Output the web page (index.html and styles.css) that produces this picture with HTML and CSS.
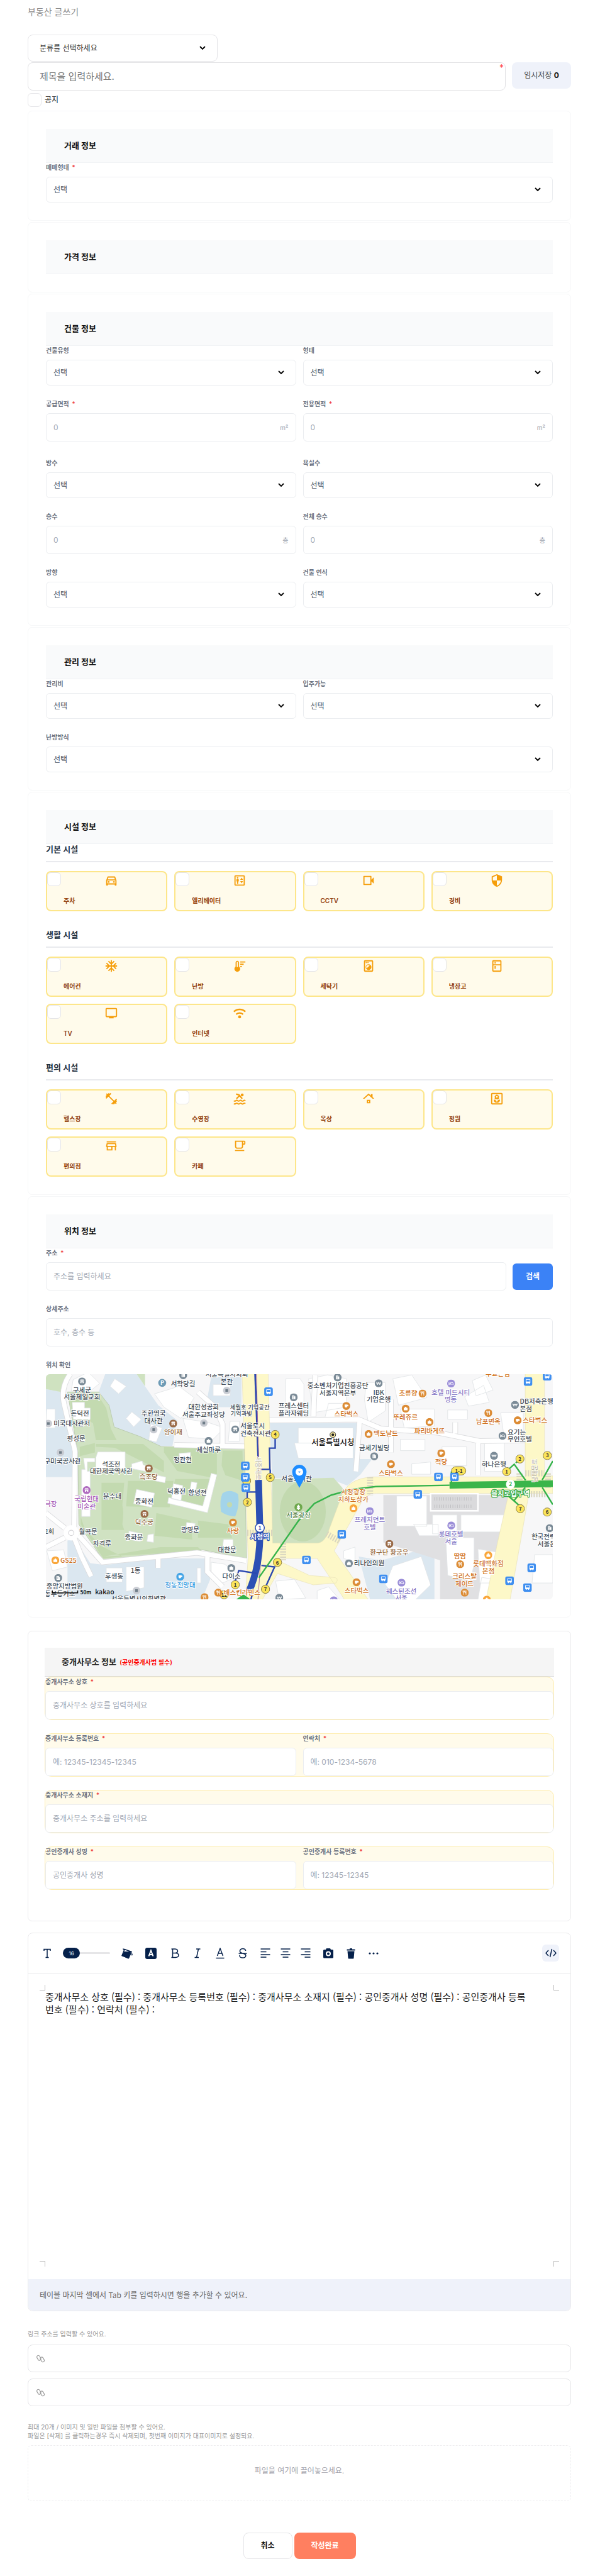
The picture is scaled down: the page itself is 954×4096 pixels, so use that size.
FILE: index.html
```html
<!DOCTYPE html>
<html lang="ko">
<head>
<meta charset="utf-8">
<meta name="viewport" content="width=device-width, initial-scale=1">
<title>부동산 글쓰기</title>
<link rel="stylesheet" href="styles.css">
</head>
<body>
<svg class="defs" width="0" height="0" aria-hidden="true">
  <symbol id="chain" viewBox="0 0 24 24"><g fill="none" stroke="currentColor" stroke-width="1.800" transform="rotate(-30 12 12)"><rect x="5.500" y="1.500" width="7.500" height="13" rx="3.750"/><rect x="11" y="9.500" width="7.500" height="13" rx="3.750"/></g></symbol>
  <symbol id="poi-cup" viewBox="-21 -21 42 42"><circle r="21"/><path d="M-9-8H6v2h5v8H5c-1 4-3 6-7 6s-7-3-7-8z" fill="#fff"/></symbol>
  <symbol id="poi-fork" viewBox="-21 -21 42 42"><circle r="21"/><path d="M-9-11v7q0 3 4 3v12M-5-11v8M-1-11v7q0 3-4 3M7 11V-11q-5 3-5 12h5" fill="none" stroke="#fff" stroke-width="3"/></symbol>
  <symbol id="poi-bed" viewBox="-21 -21 42 42"><circle r="21"/><path d="M-11-8v16M-11 4h22v4M11 4V-1q0-4-5-4H-3v8" fill="none" stroke="#fff" stroke-width="3"/><circle cx="-6" cy="-1" r="2.500" fill="#fff"/></symbol>
  <symbol id="poi-won" viewBox="-21 -21 42 42"><circle r="21"/><path d="M-11-7l5 15L0-6l6 14 5-15M-13-1h26" fill="none" stroke="#fff" stroke-width="3"/></symbol>
  <symbol id="poi-bld" viewBox="-21 -21 42 42"><circle r="21"/><path d="M-9-10H4v5h5V10H-9z" fill="#fff"/><path d="M-5-5h5M-5 0h5M-5 5h5" stroke="#7b8b97" stroke-width="2"/></symbol>
  <symbol id="poi-gate" viewBox="-21 -21 42 42"><circle r="21"/><path d="M-8-10H8l3 7H-11zM-9-1H9V9H3V3H-3V9H-9z" fill="#fff"/></symbol>
  <symbol id="poi-bag" viewBox="-21 -21 42 42"><circle r="21"/><path d="M-10-4h20V9h-20zM-5-4q0-6 5-6t5 6" fill="#fff"/></symbol>
  <symbol id="poi-bus" viewBox="-22 -22 44 44"><rect x="-22" y="-22" width="44" height="44" rx="11"/><path d="M-10-11h20V7H-10z" fill="none" stroke="#fff" stroke-width="3"/><path d="M-10 0h20v7h-20zM-8 7h4v5h-4zM4 7h4v5H4z" fill="#fff"/></symbol>
  <symbol id="poi-dot" viewBox="-21 -21 42 42"><circle r="20" fill="#c9ccd3"/><rect x="-7" y="-7" width="14" height="14" fill="#6f7d88"/></symbol>
  <symbol id="exit" viewBox="-24 -24 48 48"><circle r="22" fill="#fbe45a" stroke="#7c7040" stroke-width="3"/></symbol>
</svg>

<main class="page">
  <h1 class="page-title">부동산 글쓰기</h1>

  <form class="write">
    <select class="select category" aria-label="분류"><option>분류를 선택하세요</option></select>
    <div class="title-row">
      <div class="title-box">
        <input class="title-input" type="text" placeholder="제목을 입력하세요." aria-label="제목">
        <span class="title-mark">*</span>
      </div>
      <button class="temp-btn" type="button">임시저장 <b>0</b></button>
    </div>
    <label class="notice"><input class="check" type="checkbox"> 공지</label>

    <div class="cards">
      <section class="card">
        <h2 class="card-head">거래 정보</h2>
        <div class="field"><label for="deal">매매형태 <i>*</i></label><select class="select" id="deal"><option>선택</option></select></div>
      </section>

      <section class="card">
        <h2 class="card-head">가격 정보</h2>
      </section>

      <section class="card">
        <h2 class="card-head">건물 정보</h2>
        <div class="row">
          <div class="field"><label for="btype">건물유형</label><select class="select" id="btype"><option>선택</option></select></div>
          <div class="field"><label for="shape">형태</label><select class="select" id="shape"><option>선택</option></select></div>
        </div>
        <div class="row row-area">
          <div class="field"><label for="a1">공급면적 <i>*</i></label><div class="input unit"><input id="a1" type="text" placeholder="0"><span>m²</span></div></div>
          <div class="field"><label for="a2">전용면적 <i>*</i></label><div class="input unit"><input id="a2" type="text" placeholder="0"><span>m²</span></div></div>
        </div>
        <div class="row">
          <div class="field"><label for="rooms">방수</label><select class="select" id="rooms"><option>선택</option></select></div>
          <div class="field"><label for="baths">욕실수</label><select class="select" id="baths"><option>선택</option></select></div>
        </div>
        <div class="row">
          <div class="field"><label for="fl">층수</label><div class="input unit"><input id="fl" type="text" placeholder="0"><span>층</span></div></div>
          <div class="field"><label for="tfl">전체 층수</label><div class="input unit"><input id="tfl" type="text" placeholder="0"><span>층</span></div></div>
        </div>
        <div class="row">
          <div class="field"><label for="dir">방향</label><select class="select" id="dir"><option>선택</option></select></div>
          <div class="field"><label for="year">건물 연식</label><select class="select" id="year"><option>선택</option></select></div>
        </div>
      </section>

      <section class="card">
        <h2 class="card-head">관리 정보</h2>
        <div class="row">
          <div class="field"><label for="fee">관리비</label><select class="select" id="fee"><option>선택</option></select></div>
          <div class="field"><label for="move">입주가능</label><select class="select" id="move"><option>선택</option></select></div>
        </div>
        <div class="row">
          <div class="field"><label for="heat">난방방식</label><select class="select" id="heat"><option>선택</option></select></div>
        </div>
      </section>

      <section class="card">
        <h2 class="card-head">시설 정보</h2>
        <h3 class="group-title">기본 시설</h3>
        <div class="tiles">
          <label class="tile"><input class="check" type="checkbox"><svg viewBox="0 0 24 24"><path d="M18.920 6.010C18.720 5.420 18.160 5 17.500 5h-11c-.66 0-1.210.42-1.420 1.010L3 12v8c0 .55.45 1 1 1h1c.55 0 1-.45 1-1v-1h12v1c0 .55.45 1 1 1h1c.55 0 1-.45 1-1v-8l-2.080-5.990zM6.850 7h10.290l1.080 3.110H5.770L6.850 7zM19 17H5v-5h14v5z"/><circle cx="7.500" cy="14.500" r="1.500"/><circle cx="16.500" cy="14.500" r="1.500"/></svg><span>주차</span></label>
          <label class="tile"><input class="check" type="checkbox"><svg viewBox="0 0 24 24"><path d="M19 3H5c-1.100 0-2 .9-2 2v14c0 1.100.9 2 2 2h14c1.100 0 2-.9 2-2V5c0-1.100-.9-2-2-2zm0 16H5V5h14v14z"/><circle cx="8.500" cy="7.200" r="1.300"/><path d="M7.500 18h2v-4.500h1V11c0-1.100-.6-2-2-2s-2 .9-2 2v2.500h1zM15.500 7 13 11h5zM15.500 17l2.500-4h-5z"/></svg><span>엘리베이터</span></label>
          <label class="tile"><input class="check" type="checkbox"><svg viewBox="0 0 24 24"><path d="M15 6v12H5V6h10m1-2H4c-.55 0-1 .45-1 1v14c0 .55.45 1 1 1h12c.55 0 1-.45 1-1v-5.500l4 4v-11l-4 4V5c0-.55-.45-1-1-1z"/></svg><span>CCTV</span></label>
          <label class="tile"><input class="check" type="checkbox"><svg viewBox="0 0 24 24"><path d="M12 1L3 5v6c0 5.550 3.840 10.740 9 12 5.160-1.260 9-6.450 9-12V5l-9-4zm0 10.990h7c-.53 4.120-3.280 7.790-7 8.940V12H5V6.300l7-3.110v8.800z"/></svg><span>경비</span></label>
        </div>
        <h3 class="group-title">생활 시설</h3>
        <div class="tiles">
          <label class="tile"><input class="check" type="checkbox"><svg viewBox="0 0 24 24"><path d="M22 11h-4.170l3.240-3.240-1.410-1.420L15 11h-2V9l4.660-4.660-1.420-1.410L13 6.170V2h-2v4.170L7.760 2.930 6.340 4.340 11 9v2H9L4.340 6.340 2.930 7.760 6.170 11H2v2h4.170l-3.240 3.240 1.410 1.420L9 13h2v2l-4.660 4.660 1.420 1.410L11 17.830V22h2v-4.170l3.240 3.240 1.420-1.410L13 15v-2h2l4.660 4.660 1.410-1.420L17.830 13H22z"/></svg><span>에어컨</span></label>
          <label class="tile"><input class="check" type="checkbox"><svg viewBox="0 0 24 24"><path d="M11 13V6c0-1.660-1.340-3-3-3S5 4.340 5 6v7c-1.210.91-2 2.370-2 4 0 2.760 2.240 5 5 5s5-2.240 5-5c0-1.630-.79-3.090-2-4zM7 6c0-.55.45-1 1-1s1 .45 1 1v8H7z"/><path d="M13 4h9v2h-9zM13 8h6v2h-6zM13 12h3v1.500h-3z"/></svg><span>난방</span></label>
          <label class="tile"><input class="check" type="checkbox"><svg viewBox="0 0 24 24"><path d="M18 2.010L6 2c-1.110 0-2 .89-2 2v16c0 1.110.89 2 2 2h12c1.110 0 2-.89 2-2V4c0-1.110-.89-1.990-2-1.990zM18 20H6V4h12v16z"/><circle cx="8" cy="6" r="1"/><circle cx="11" cy="6" r="1"/><path d="M12 9a5 5 0 1 0 0 10 5 5 0 0 0 0-10zm0 1.500q1 0 2 .6l-5.400 5a3.500 3.500 0 0 1 3.400-5.600z"/></svg><span>세탁기</span></label>
          <label class="tile"><input class="check" type="checkbox"><svg viewBox="0 0 24 24"><path d="M18 2.010L6 2c-1.100 0-2 .89-2 2v16c0 1.100.9 2 2 2h12c1.100 0 2-.9 2-2V4c0-1.110-.9-1.990-2-1.990zM18 20H6v-9.020h12V20zm0-11H6V4h12v5zM8 5h2v3H8zm0 7h2v5H8z"/></svg><span>냉장고</span></label>
          <label class="tile"><input class="check" type="checkbox"><svg viewBox="0 0 24 24"><path d="M20 3H4c-1.100 0-2 .9-2 2v12c0 1.100.9 2 2 2h4v2h8v-2h4c1.100 0 2-.9 2-2V5c0-1.100-.9-2-2-2zm0 14H4V5h16v12z"/></svg><span>TV</span></label>
          <label class="tile"><input class="check" type="checkbox"><svg viewBox="0 0 24 24"><g fill="none" stroke="#f59e0b" stroke-width="2.600"><path d="M2 9.500a14.500 14.500 0 0 1 20 0M6 14a8.700 8.700 0 0 1 12 0"/></g><circle cx="12" cy="18.500" r="2.600"/></svg><span>인터넷</span></label>
        </div>
        <h3 class="group-title">편의 시설</h3>
        <div class="tiles">
          <label class="tile"><input class="check" type="checkbox"><svg viewBox="0 0 24 24"><path d="M20.570 14.860L22 13.430 20.570 12 17 15.570 8.430 7 12 3.430 10.570 2 9.140 3.430 7.710 2 5.570 4.140 4.140 2.710 2.710 4.140l1.430 1.430L2 7.710l1.430 1.430L2 10.570 3.430 12 7 8.430 15.570 17 12 20.570 13.430 22l1.430-1.430L16.290 22l2.140-2.140 1.430 1.430 1.430-1.430-1.430-1.430L22 16.290l-1.430-1.430z"/></svg><span>헬스장</span></label>
          <label class="tile"><input class="check" type="checkbox"><svg viewBox="0 0 24 24"><g fill="none" stroke="#f59e0b" stroke-width="2"><path d="M2 15.500q1.700 1.500 3.300 0t3.400 0 3.300 0 3.300 0 3.400 0 3.300 0M2 20.500q1.700 1.500 3.300 0t3.400 0 3.300 0 3.300 0 3.400 0 3.300 0"/><path d="M6 4l5 1.500 5.500 6.500M12 6.500 6.500 12" stroke-width="2.400"/></g><circle cx="16.500" cy="5.500" r="2.500"/></svg><span>수영장</span></label>
          <label class="tile"><input class="check" type="checkbox"><svg viewBox="0 0 24 24"><path d="M13 18h-2v-2h2v2zm2-4H9v6h6v-6zm4-4.700V4h-3v2.600L12 3 2 12h3l7-6.310L19 12h3l-3-2.700z"/></svg><span>옥상</span></label>
          <label class="tile"><input class="check" type="checkbox"><svg viewBox="0 0 24 24"><path d="M20 2H4c-1.100 0-2 .9-2 2v16c0 1.100.9 2 2 2h16c1.100 0 2-.9 2-2V4c0-1.100-.9-2-2-2zm0 18H4V4h16v16z"/><path d="M12 19c3.300 0 5.500-2.200 5.500-5.500-3.300 0-5.500 2.200-5.500 5.500 0-3.300-2.200-5.500-5.500-5.500 0 3.300 2.200 5.500 5.500 5.500z"/><path fill-rule="evenodd" d="M12 5a2 2 0 0 1 2 1.200 2 2 0 0 1 1.300 3.300A2 2 0 0 1 12 12.500a2 2 0 0 1-3.300-3A2 2 0 0 1 10 6.200 2 2 0 0 1 12 5zm0 2.300a1.500 1.500 0 1 0 0 3 1.500 1.500 0 0 0 0-3z"/></svg><span>정원</span></label>
          <label class="tile"><input class="check" type="checkbox"><svg viewBox="0 0 24 24"><path d="M18.360 9l.6 3H5.040l.6-3h12.720M20 4H4v2h16V4zm0 3H4l-1 5v2h1v6h10v-6h4v6h2v-6h1v-2l-1-5zM6 18v-4h6v4H6z"/></svg><span>편의점</span></label>
          <label class="tile"><input class="check" type="checkbox"><svg viewBox="0 0 24 24"><path d="M16 5v8c0 1.100-.9 2-2 2H8c-1.100 0-2-.9-2-2V5h10m4-2H4v10c0 2.210 1.790 4 4 4h6c2.210 0 4-1.790 4-4v-3h2c1.110 0 2-.89 2-2V5c0-1.110-.89-2-2-2zm-2 5V5h2v3h-2zm2 11H4v2h16v-2z"/></svg><span>카페</span></label>
        </div>
      </section>

      <section class="card">
        <h2 class="card-head">위치 정보</h2>
        <div class="field">
          <label for="addr">주소 <i>*</i></label>
          <div class="search"><input class="input" id="addr" type="text" placeholder="주소를 입력하세요"><button class="search-btn" type="button">검색</button></div>
        </div>
        <div class="row"><div class="field"><label for="addr2">상세주소</label><input class="input" id="addr2" type="text" placeholder="호수, 층수 등"></div></div>
        <div class="row"><div class="field">
          <label>위치 확인</label>
          <svg class="map" viewBox="66 84 2680 1194" preserveAspectRatio="xMidYMid slice" role="img" aria-label="지도">
            <rect x="66" y="84" width="2680" height="1194" fill="#f7f7f8"/>
            <!-- embassy and office grounds -->
            <g fill="#dbe7f0">
              <path d="M66 165l85 15 70 260 14 60-25 130H66zM380 84h165l45 66 70 100 100 80-25 135h-65L560 420l-130-50-30-100-55-90zM940 100h160v160H950l-30-50z"/>
              <path d="M180 965l40-5 80 125 80 10 280-35h255l20 110-45 108H180zM1250 345h460v290H1262zM1700 635l0-100 90 0-60 80-70 60-100-40zM1720 1050l120 20 280-75v283h-340z"/>
            </g>
            <path d="M1850 725h740l-40 220-70 90-60 243h-270V1070l-300-95z" fill="#e0e0e2"/>
            <!-- parks -->
            <path d="M66 84h124l-45 96-79-15zM545 84h45v66z" fill="#cfe2c0"/>
            <path d="M180 180h165l55 70 27 115 135 50 113 53 440 12 12 580-257-50-500 60-130-190-5-380z" fill="#d0e2c2" stroke="#b9c9ae" stroke-width="3"/>
            <g fill="#c3dab0">
              <path d="M190 195h150l45 70 25 110 30 60-110 0-15-90-50-30-50 60zM330 455l250 0 110 90 0 60-260-130-100-5zM690 500l0-30 200 8 80 10 0 150-210-40zM1000 490h105l5 160-95-30-20-50zM250 840l0 40 120 180 100-10-120-60-80-90zM650 820l180 40 10 100-200-20zM870 860l160 20 20 70-180 0zM370 1050l300-50 200 0 20 20zM245 470l80-20 0 50-80 20zM500 650l240 0-20 140-230-5zM750 640l200 0-30 160-200-40z"/>
              <path d="M360 660h120l-10 120q10 30 0 100l10 30-60 0-60 0V780z"/>
            </g>
            <path d="M1262 640l325-6 53 60-80 250q-20 36-60 36H1262z" fill="#cfe1c0"/>
            <ellipse cx="1424" cy="812" rx="122" ry="158" fill="#c2d9af"/>
            <path d="M1000 715q40-25 82 5 10 60-15 118-40 0-75-25-10-60 8-98z" fill="#a3d4ea"/>
            <circle cx="1037" cy="776" r="14" fill="#c3dab0"/>
            <!-- buildings -->
            <g fill="#fff" stroke="#e1e4e6" stroke-width="3">
              <path d="M205 235l65 0 0 30 30 0 0 60-90 0zM340 497l145 0 0 90-155 0 0-60zM265 530h60v20h-40v50h15v238h-45V590h18zM520 560l55-15 5 20 30 10-15 25-75-15zM545 695l95 20-15 75-95-20zM940 610l30 8-50 200-210-50 5-30 180 45zM740 665l50 10-10 80-50-10zM835 655l30 5-10 60-30-5zM770 505l60-5 0 45-55 5zM505 915l70 15-10 40-60-10zM605 935l30-5 0 45-35-5zM1005 960h50l0 50-55-5zM810 870l45 5-5 40-45-5zM650 620l50 10-5 30-50-10z"/>
              <path d="M210 115l80-40 60 60-50 40-100 0zM430 110l60 40-40 40-45-40zM520 285l50 40-40 40-40-45zM620 350l60 20-30 75-40-10zM640 190l130-40 80 60-70 110-90-60zM790 320l130 20 90 30-60 60-130-10zM950 140h90v60h-90zM1040 335h50v105h-60zM1335 110l75 0 20 30 0 130-100 0zM385 1110l85 0 0 75-85 0zM490 1105l95 0 0 110-95 20zM865 1110h20v80h-20zM70 1020l90-5 20 90-80 20zM940 1080l70 10 80 60-90 40-60-50zM1280 1180l100-10 60 100-140 8zM70 270l45 0 0 100-50 0z"/>
              <path d="M1455 110l100-20 100 20 0 150-180 30zM1760 130l100 0 0 150-90 60-20-120zM1900 110l100-20 80 120-150 40zM2320 120l70-30 40 80-90 30zM1940 270l180 0 0 90-160 10zM2190 275h105v50h-105zM1560 240h90v80h-110zM1400 370h290v80h-290zM1380 450h310v80h-290zM1940 430h130v60h-130zM2160 470h130v100h-130zM2000 560l100-10 0 65-100 0zM2385 450h105v150h-105zM2470 290l120 0 0 120-100 20zM1920 730h160v160h-160zM2110 830h130v100h-130zM2260 830l280 0 0 90-280 0zM2010 880l130 0 0 60-100 0zM2180 950l150 0 0 140-20 90-120-30zM2350 1010l180 30-40 150-130 0zM2370 1160l120 20-20 98-120 0zM2650 1040h96v150h-110zM1900 1100l150-50 50 150-80 78-100 0-60-80zM1640 1020l60-20 0 80-60-20zM1500 1230l60-20 60 68h-120zM2280 205l100-60 30 90-110 20z"/>
            </g>
            <!-- minor roads: casing, then surface -->
            <g fill="none" stroke-width="30" stroke="#dcdddf"><path d="M195 84q-50 70-35 150l60 260-5 400M240 940l125 140 500-50 260 42M215 950l40 100 50 105M66 820l100 80M66 1000l100-50M745 460l370 8M870 180l90 80 40 90v110M660 1060v50M920 1040v90l80 80M1240 330l480-5 120 50 300 20 220 45 240-5M1725 330l-20 270M1890 220v280M1490 90l-10 220M2350 450v170M2230 340v60"/></g>
            <g fill="none" stroke-width="24" stroke="#fff"><path d="M195 84q-50 70-35 150l60 260-5 400M240 940l125 140 500-50 260 42M215 950l40 100 50 105M66 820l100 80M66 1000l100-50M745 460l370 8M870 180l90 80 40 90v110M660 1060v50M920 1040v90l80 80M1240 330l480-5 120 50 300 20 220 45 240-5M1725 330l-20 270M1890 220v280M1490 90l-10 220M2350 450v170M2230 340v60"/></g>
            <circle cx="200" cy="925" r="40" fill="#fff"/><circle cx="200" cy="925" r="14" fill="none" stroke="#d5d5d8" stroke-width="4"/>
            <!-- main roads -->
            <path d="M1103 84h138l24 895h235q35 0 55-50l75-200q30-90 160-100h810V84h102v540h44v92h-126l-60 340-40 222h-127l60-300 60-262h-700q-60 0-80 50L1590 1020l180 258h-125L1500 1060h-230l190 90 120 10q40 0 20 30l-120 10-190-60-80 138h-90l15-220z" fill="#fdf8c8" stroke="#e6dfb6" stroke-width="2"/>
            <path d="M2100 718h250v90h-250z" fill="#dadadc" stroke="#fff" stroke-width="8"/>
            <path d="M2120 745h200M2120 785h200" stroke="#bdbdc0" stroke-width="18" stroke-dasharray="3 9"/>
            <g stroke="#d9d6c0" stroke-width="32" stroke-dasharray="7 7" fill="none"><path d="M1130 925h135M1320 980v90M1780 630v100M2570 610v80M2720 610v80M1550 930l70 40M2600 610h100M2630 720h80"/></g>
            <!-- subway lines -->
            <g fill="none">
              <path d="M1172 84l16 440" stroke="#2b48b0" stroke-width="9"/><path d="M1179 84l14 560 20 260-26 374" stroke="#a0609d" stroke-width="3"/>
              <path d="M1190 645l7 255q5 200-60 340" stroke="#2c50b4" stroke-width="36"/>
              <path d="M1278 425v52h-30l2 112h-50M1252 590v20M1130 745v-36h50M1066 1180l20-56 100 16M1205 1097l70 8-45 100M1150 1278l10-40" stroke="#2b48b0" stroke-width="8"/>
              <path d="M1192 1162l210-302 83-90 90-45 110-30 125-15 390-7" stroke="#35b34a" stroke-width="8"/>
              <path d="M2200 673l546-8" stroke="#3ab54a" stroke-width="36"/>
              <path d="M2210 660v-60M2500 600l42-38 60 85M2550 555l30-25M2690 645l56-100M2690 685l56 90M2600 685l-60 70 40 35M2500 720l40 35" stroke="#35b34a" stroke-width="8"/>
              <path d="M1070 1278l40-28 40 28z" fill="#35b34a"/>
            </g>
            <!-- exits -->
            <use href="#exit" x="1254" y="381" width="48" height="48"/><use href="#exit" x="1228" y="608" width="48" height="48"/><use href="#exit" x="1103" y="625" width="48" height="48"/><use href="#exit" x="1107" y="739" width="48" height="48"/><use href="#exit" x="1266" y="1057" width="48" height="48"/><use href="#exit" x="1203" y="1199" width="48" height="48"/><use href="#exit" x="1043" y="1175" width="48" height="48"/><use href="#exit" x="984" y="1228" width="48" height="48"/>
            <use href="#exit" x="2548" y="510" width="48" height="48"/><use href="#exit" x="2478" y="577" width="48" height="48"/><use href="#exit" x="2693" y="492" width="48" height="48"/><use href="#exit" x="2550" y="773" width="48" height="48"/><use href="#exit" x="2692" y="791" width="48" height="48"/>
            <rect x="2210" y="575" width="76" height="44" rx="22" fill="#fbe45a" stroke="#7c7040" stroke-width="3"/>
            <g class="num"><text x="1278" y="415">4</text><text x="1252" y="642">5</text><text x="1131" y="774">2</text><text x="1290" y="1092">6</text><text x="1227" y="1233">7</text><text x="1067" y="1210">1</text><text x="1008" y="1263">12</text><text x="2572" y="544">2</text><text x="2502" y="611">1</text><text x="2717" y="526">3</text><text x="2574" y="807">7</text><text x="2716" y="825">6</text><text x="2249" y="608">1-1</text></g>
            <g fill="#3f8ff0">
              <use href="#poi-bus" x="1220" y="156" width="46" height="46"/><use href="#poi-bus" x="1097" y="548" width="46" height="46"/><use href="#poi-bus" x="1097" y="608" width="46" height="46"/><use href="#poi-bus" x="1100" y="663" width="46" height="46"/><use href="#poi-bus" x="1420" y="1045" width="46" height="46"/><use href="#poi-bus" x="1607" y="910" width="46" height="46"/><use href="#poi-bus" x="1827" y="1145" width="46" height="46"/><use href="#poi-bus" x="2009" y="698" width="46" height="46"/><use href="#poi-bus" x="2118" y="606" width="46" height="46"/><use href="#poi-bus" x="2203" y="606" width="46" height="46"/><use href="#poi-bus" x="2592" y="102" width="46" height="46"/><use href="#poi-bus" x="2693" y="74" width="46" height="46"/><use href="#poi-bus" x="2611" y="1087" width="46" height="46"/><use href="#poi-bus" x="2494" y="1155" width="46" height="46"/><use href="#poi-bus" x="2589" y="1191" width="46" height="46"/>
            </g>
            <g fill="#7b8b97">
              <use href="#poi-gate" x="236" y="103" width="42" height="42"/><use href="#poi-bld" x="771" y="70" width="42" height="42"/><use href="#poi-gate" x="1046" y="357" width="42" height="42"/><use href="#poi-bag" x="905" y="418" width="42" height="42"/><use href="#poi-bld" x="1355" y="187" width="42" height="42"/><use href="#poi-bld" x="110" y="1142" width="42" height="42"/><use href="#poi-bag" x="1025" y="1090" width="42" height="42"/><use href="#poi-won" x="1279" y="1247" width="42" height="42"/><use href="#poi-bld" x="1587" y="82" width="42" height="42"/><use href="#poi-won" x="1804" y="113" width="42" height="42"/><use href="#poi-bld" x="1781" y="499" width="42" height="42"/><use href="#poi-won" x="2525" y="227" width="42" height="42"/><use href="#poi-won" x="2414" y="496" width="42" height="42"/><use href="#poi-bed" x="2459" y="391" width="42" height="42"/><use href="#poi-bag" x="1647" y="1065" width="42" height="42"/><use href="#poi-bld" x="2708" y="879" width="42" height="42"/>
              <use href="#poi-dot" x="1001" y="151" width="42" height="42"/><use href="#poi-dot" x="615" y="358" width="42" height="42"/><use href="#poi-dot" x="880" y="323" width="42" height="42"/><use href="#poi-dot" x="58" y="326" width="42" height="42"/><use href="#poi-dot" x="122" y="479" width="42" height="42"/><use href="#poi-dot" x="524" y="1209" width="42" height="42"/>
            </g>
            <g fill="#9a6b48"><use href="#poi-gate" x="718" y="326" width="42" height="42"/><use href="#poi-gate" x="589" y="563" width="42" height="42"/><use href="#poi-gate" x="566" y="804" width="42" height="42"/><use href="#poi-gate" x="1861" y="962" width="42" height="42"/></g>
            <g fill="#dc8c35">
              <use href="#poi-cup" x="1034" y="849" width="42" height="42"/><use href="#poi-cup" x="1633" y="233" width="42" height="42"/><use href="#poi-cup" x="1869" y="541" width="42" height="42"/><use href="#poi-cup" x="2135" y="483" width="42" height="42"/><use href="#poi-cup" x="2539" y="309" width="42" height="42"/><use href="#poi-cup" x="1687" y="1165" width="42" height="42"/>
              <use href="#poi-fork" x="2036" y="167" width="42" height="42"/><use href="#poi-fork" x="2384" y="270" width="42" height="42"/><use href="#poi-fork" x="2235" y="1070" width="42" height="42"/><use href="#poi-fork" x="2259" y="1220" width="42" height="42"/><use href="#poi-fork" x="884" y="1244" width="42" height="42"/><use href="#poi-fork" x="956" y="1220" width="42" height="42"/>
              <use href="#poi-bag" x="1947" y="247" width="42" height="42"/><use href="#poi-bag" x="2073" y="318" width="42" height="42"/><use href="#poi-bag" x="1751" y="381" width="42" height="42"/>
            </g>
            <g fill="#f9a63a"><use href="#poi-bag" x="95" y="1049" width="42" height="42"/><use href="#poi-bag" x="1671" y="774" width="42" height="42"/><use href="#poi-bag" x="2384" y="1022" width="42" height="42"/><use href="#poi-bag" x="2376" y="1257" width="42" height="42"/></g>
            <g fill="#9b8ed8"><use href="#poi-bed" x="2187" y="114" width="42" height="42"/><use href="#poi-bed" x="1757" y="789" width="42" height="42"/><use href="#poi-bed" x="2188" y="865" width="42" height="42"/><use href="#poi-bed" x="1925" y="1167" width="42" height="42"/><use href="#poi-bed" x="1567" y="1260" width="42" height="42"/></g>
            <g fill="#b06cc0"><use href="#poi-gate" x="260" y="678" width="42" height="42"/></g>
            <g fill="#45a5e6"><use href="#poi-cup" x="755" y="1136" width="42" height="42"/></g>
            <circle cx="681" cy="132" r="21" fill="#6e9bb5"/><text class="p-mark" x="681" y="143">P</text>
            <circle cx="1401" cy="789" r="21" fill="#6ea84c"/><path d="M1401 775l10 14h-6l7 10h-22l7-10h-6zM1399 799h4v5h-4z" fill="#fff"/>
            <!-- place names -->
            <g class="place">
              <text x="257" y="181">구세군</text><text x="257" y="220">서울제일교회</text><text x="791" y="148">서학당길</text><text x="1022" y="100">서울특별시의회</text><text x="1022" y="139">본관</text><text x="246" y="305">돈덕전</text><text x="203" y="360">미국대사관저</text><text x="226" y="437">평성문</text><text x="154" y="557">구미국공사관</text><text x="635" y="306">주한영국</text><text x="635" y="345">대사관</text><text x="900" y="272">대한성공회</text><text x="900" y="311">서울주교좌성당</text><text x="1144" y="272" class="sm">세월호 기억공간</text><text x="1099" y="305" class="sm">기억과빛</text><text x="1159" y="371">서울도시</text><text x="1175" y="411">건축전시관</text><text x="926" y="497">세실마루</text><text x="789" y="552">정관헌</text><text x="411" y="574">석조전</text><text x="411" y="611">대한제국역사관</text><text x="756" y="719">덕홍전</text><text x="867" y="724">함녕전</text><text x="417" y="743">분수대</text><text x="586" y="771">중화전</text><text x="829" y="919">광명문</text><text x="531" y="960">중화문</text><text x="289" y="931">월곡문</text><text x="363" y="995">자격루</text><text x="1024" y="1026">대한문</text><text x="78" y="932">교회</text><text x="540" y="1138">1동</text><text x="427" y="1166">후생동</text><text x="1047" y="1168">다이소</text><text x="165" y="1219">중앙지방법원</text><text x="140" y="1260">동부등기소</text><text x="556" y="1286">서울특별시의회별관</text>
              <text x="1376" y="266">프레스센터</text><text x="1376" y="305">플라자웨딩</text><text x="1391" y="652">서울도서관</text><text x="1609" y="160">중소벤처기업진흥공단</text><text x="1609" y="199">서울지역본부</text><text x="1825" y="195">IBK</text><text x="1825" y="233">기업은행</text><text x="1802" y="488">금세기빌딩</text><text x="2435" y="574">하나은행</text><text x="2660" y="242">DB저축은행</text><text x="2604" y="281">본점</text><text x="2555" y="404">요기는</text><text x="2571" y="443">무인호텔</text><text x="1775" y="1098">리나인의원</text><text x="2697" y="958">한국전력</text><text x="2730" y="998">서울본부</text>
            </g>
            <g class="place orange"><text x="1055" y="927">사랑</text><text x="1655" y="310">스타벅스</text><text x="1890" y="620">스타벅스</text><text x="2652" y="343">스타벅스</text><text x="1709" y="1242">스타벅스</text><text x="1981" y="200">초류향</text><text x="1967" y="325">뚜레쥬르</text><text x="2094" y="397">파리바게뜨</text><text x="1863" y="413">맥도날드</text><text x="2156" y="562">적당</text><text x="2405" y="349">남포면옥</text><text x="2455" y="97">무교은점</text><text x="2255" y="1059">땀땀</text><text x="2279" y="1168">크리스탈</text><text x="2279" y="1207">제이드</text><text x="1103" y="1252">배스킨라빈스</text><text x="185" y="1082">GS25</text><text x="1691" y="721">시청광장</text><text x="1691" y="761">지하도상가</text><text x="2405" y="1100">롯데백화점</text><text x="2405" y="1139">본점</text></g>
            <g class="place violet"><text x="2206" y="194">호텔 미드시티</text><text x="2206" y="233">명동</text><text x="1778" y="868">프레지던트</text><text x="1778" y="908">호텔</text><text x="2208" y="944">롯데호텔</text><text x="2208" y="983">서울</text><text x="1945" y="1245">웨스틴조선</text><text x="1945" y="1284">서울</text></g>
            <g class="place brown"><text x="739" y="404">양이재</text><text x="609" y="640">즉조당</text><text x="586" y="882">덕수궁</text><text x="1881" y="1041">환구단 황궁우</text></g>
            <g class="place magenta"><text x="281" y="758">국립현대</text><text x="281" y="797">미술관</text><text x="92" y="784">극장</text></g>
            <g class="place sky"><text x="776" y="1213">정동전망대</text></g>
            <g class="place leaf"><text x="1401" y="845">서울광장</text></g>
            <text class="hall" x="1583" y="460">서울특별시청</text>
            <circle cx="1583" cy="406" r="15" fill="#f6e7a0" stroke="#222" stroke-width="3"/><circle cx="1583" cy="406" r="7" fill="#222"/>
            <g class="street"><text transform="translate(1178 582) rotate(90)">세종대로</text><text transform="translate(2662 596) rotate(-90)">남대문로</text></g>
            <circle cx="1197" cy="898" r="24" fill="#fff" stroke="#2c50b4" stroke-width="5"/><text class="line1" x="1197" y="909">1</text><text class="station blue" x="1197" y="960">시청역</text>
            <circle cx="2522" cy="668" r="24" fill="#fff"/><text class="line2" x="2522" y="679">2</text><text class="station green" x="2522" y="731">을지로입구역</text>
            <path d="M1406 687l-28-52q-10-16-10-32a38 38 0 0 1 76 0q0 16-10 32z" fill="#1e8cff"/><circle cx="1406" cy="603" r="20" fill="#fff"/><path d="M1399 600h14l-7 8z" fill="#1e8cff"/>
            <path d="M100 1230v12h134v-12" fill="none" stroke="#111" stroke-width="5"/><text class="scale" x="247" y="1250">50m</text><text class="kakao" x="326" y="1250">kakao</text>
          </svg>
        </div></div>
      </section>
    </div>

    <section class="agency">
      <h2 class="agency-head">중개사무소 정보 <small>(공인중개사법 필수)</small></h2>
      <div class="agency-row"><div class="field"><label for="g1">중개사무소 상호 <i>*</i></label><input class="input" id="g1" type="text" placeholder="중개사무소 상호를 입력하세요"></div></div>
      <div class="agency-row">
        <div class="field"><label for="g2">중개사무소 등록번호 <i>*</i></label><input class="input" id="g2" type="text" placeholder="예: 12345-12345-12345"></div>
        <div class="field"><label for="g3">연락처 <i>*</i></label><input class="input" id="g3" type="text" placeholder="예: 010-1234-5678"></div>
      </div>
      <div class="agency-row"><div class="field"><label for="g4">중개사무소 소재지 <i>*</i></label><input class="input" id="g4" type="text" placeholder="중개사무소 주소를 입력하세요"></div></div>
      <div class="agency-row">
        <div class="field"><label for="g5">공인중개사 성명 <i>*</i></label><input class="input" id="g5" type="text" placeholder="공인중개사 성명"></div>
        <div class="field"><label for="g6">공인중개사 등록번호 <i>*</i></label><input class="input" id="g6" type="text" placeholder="예: 12345-12345"></div>
      </div>
    </section>

    <section class="editor">
      <div class="toolbar">
        <button type="button" aria-label="글꼴"><svg viewBox="0 0 18 18"><path d="M4 5V2.500h10V5M9 2.500v13M6.500 15.500h5" class="ln"/></svg></button>
        <label class="size"><input type="range" min="16" max="60" value="16" aria-label="글자 크기"><span>16</span></label>
        <div class="tools wide">
          <button type="button" aria-label="배경색"><svg viewBox="0 0 18 18"><path d="M4 6h11.500L11 17.500 1 13z"/><path d="M2.500 1.500 5 4M1 12.500 5 2.500l11 4-4.500 10z" class="ln"/><path d="M16.500 8q2 3 1 4t-1.500-.5z"/></svg></button>
          <button type="button" aria-label="글자색"><svg viewBox="0 0 18 18"><rect width="18" height="18" rx="3"/><path d="M5.500 13.500 9 4.500l3.500 9M6.700 11h4.600" fill="none" stroke="#fff" stroke-width="2"/></svg></button>
          <button type="button" aria-label="굵게"><svg viewBox="0 0 18 18"><path d="M3.500 2h6q4 .3 4 3.300t-4 3.300H5.500h4.500q5 .3 5 3.500T10 15.500H3.500M5.500 2v13.500" class="ln"/></svg></button>
        </div>
        <button type="button" aria-label="기울임"><svg viewBox="0 0 18 18"><path d="M7 2h6.500M4.500 15.500H11M10.500 2l-3 13.500" class="ln"/></svg></button>
        <button type="button" aria-label="밑줄"><svg viewBox="0 0 18 18"><path d="M4.500 13 9 1l4.500 12M6 9h6M2.500 16.500h13" class="ln"/></svg></button>
        <button type="button" aria-label="취소선"><svg viewBox="0 0 18 18"><path d="M13.500 5V4q-1-2.500-4.500-2.500T4.500 4.500 9 9t4.800 3.700Q13.500 16 9 16t-5-3v-1.500M2.500 9h13" class="ln"/></svg></button>
        <div class="tools">
          <button type="button" aria-label="왼쪽 정렬"><svg viewBox="0 0 18 18"><path d="M1.500 2h15M1.500 6.500h9M1.500 11h15M1.500 15h9" class="ln"/></svg></button>
          <button type="button" aria-label="가운데 정렬"><svg viewBox="0 0 18 18"><path d="M1.500 2h15M4.500 6.500h9M1.500 11h15M4.500 15h9" class="ln"/></svg></button>
          <button type="button" aria-label="오른쪽 정렬"><svg viewBox="0 0 18 18"><path d="M1.500 2h15M7.500 6.500h9M1.500 11h15M7.500 15h9" class="ln"/></svg></button>
        </div>
        <button type="button" aria-label="사진"><svg viewBox="0 0 18 18"><path d="M6 1h6l1 2h2.500q1.500 0 1.500 1.500V15q0 1.500-1.500 1.500h-13Q1 16.500 1 15V4.500Q1 3 2.500 3H5z"/><circle cx="9" cy="9.500" r="3" fill="none" stroke="#fff" stroke-width="2"/></svg></button>
        <button type="button" aria-label="삭제"><svg viewBox="0 0 18 18"><path d="M2.500 2.500H7V1h4v1.500h4.500v2h-13zM3.500 5.500h11l-1 11q0 1-1 1h-7q-1 0-1-1z"/></svg></button>
        <button type="button" aria-label="더보기"><svg viewBox="0 0 18 18"><circle cx="3" cy="9" r="1.600"/><circle cx="9" cy="9" r="1.600"/><circle cx="15" cy="9" r="1.600"/></svg></button>
        <button class="code" type="button" aria-label="HTML"><svg viewBox="0 0 18 18"><path d="M5 4 1 8.500 5 13M13 4l4 4.500-4 4.500M10.500 2l-3 13" class="ln"/></svg></button>
      </div>
      <div class="editor-body" contenteditable="true">
        <p>중개사무소 상호 (필수) : 중개사무소 등록번호 (필수) : 중개사무소 소재지 (필수) : 공인중개사 성명 (필수) : 공인중개사 등록번호 (필수) : 연락처 (필수) :</p>
        <span class="corner tl"></span><span class="corner tr"></span><span class="corner bl"></span><span class="corner br"></span>
      </div>
      <p class="editor-tip">테이블 마지막 셀에서 Tab 키를 입력하시면 행을 추가할 수 있어요.</p>
    </section>

    <section class="links">
      <p class="hint">링크 주소를 입력할 수 있어요.</p>
      <label class="link-box"><svg><use href="#chain"/></svg><input type="url" aria-label="링크 1"></label>
      <label class="link-box"><svg><use href="#chain"/></svg><input type="url" aria-label="링크 2"></label>
    </section>

    <section class="files">
      <p class="hint">최대 20개 / 이미지 및 일반 파일을 첨부할 수 있어요.<br>파일은 [삭제] 를 클릭하는경우 즉시 삭제되며, 첫번째 이미지가 대표이미지로 설정되요.</p>
      <div class="drop">파일을 여기에 끌어놓으세요.</div>
    </section>

    <div class="actions">
      <button class="cancel" type="button">취소</button>
      <button class="submit" type="submit">작성완료</button>
    </div>
  </form>
</main>
</body>
</html>
```
FILE: styles.css
```css
* { box-sizing: border-box; }
body {
  margin: 0;
  background: #fff;
  color: #222;
  font: 12px/14px Inter, "Noto Sans CJK KR", sans-serif;
}
h1, h2, h3, p { margin: 0; }
button, input, select { font: inherit; color: inherit; margin: 0; }
button { padding: 0; border: 0; background: none; }
.defs { position: absolute; }
.page { padding: 9px 46px 27px 44px; }
.page-title { margin-bottom: 26px; font-size: 14px; line-height: 20px; font-weight: 400; color: #8c8c8c; }
.write { display: flex; flex-direction: column; }

.select {
  appearance: none;
  display: block;
  width: 100%;
  height: 41px;
  padding: 0 40px 0 11px;
  border: 1px solid #ebedf0;
  border-radius: 6px;
  color: #4b5563;
  background: #fff url("data:image/svg+xml,%3Csvg xmlns='http://www.w3.org/2000/svg' width='10' height='7' viewBox='0 0 10 7'%3E%3Cpath d='M1 1l4 4 4-4' fill='none' stroke='%23000' stroke-width='1.800'/%3E%3C/svg%3E") no-repeat right 18px center;
}
.category { width: 302px; height: 43px; padding-left: 18px; border-color: #e5e5e8; border-radius: 8px; color: #333; }
.title-row { display: flex; gap: 10px; margin-top: 1px; }
.title-box { position: relative; flex: 1; }
.title-input { width: 100%; height: 45px; padding: 0 18px; border: 1px solid #e2e2e5; border-radius: 8px; font-size: 15px; background: #fff; }
.title-input::placeholder { color: #777; opacity: 1; }
.title-mark { position: absolute; top: 2px; right: 3px; font-size: 14px; line-height: 14px; color: #f44; }
.temp-btn { width: 94px; height: 42px; border-radius: 8px; background: #eff2fa; color: #444; }
.temp-btn b { color: #111; }
.notice { display: flex; align-items: center; gap: 5px; margin-top: 4px; width: max-content; }
.check { appearance: none; flex: none; width: 22px; height: 22px; border: 1px solid #e5e5e8; border-radius: 6px; background: #fff; }
.check:checked { background: #3b82f6; }

.cards { display: flex; flex-direction: column; gap: 2px; margin-top: 6px; }
.card { padding: 28px; border: 1px solid #f6f7f8; border-radius: 7px; }
.card-head { height: 54px; padding-left: 29px; border-bottom: 1px solid #f1f3f5; background: #f9fafb; font-size: 13px; line-height: 53px; font-weight: 700; color: #111; }
.row { display: flex; gap: 11px; }
.row + .row, .field + .row { margin-top: 22px; }
.row-area + .row { margin-top: 27px; }
.field { flex: 1; min-width: 0; }
.field label { display: block; margin-bottom: 8px; font-size: 10px; line-height: 14px; font-weight: 600; color: #6b7280; }
.field label i { margin-left: 2px; font-style: normal; font-weight: 700; color: #ef4444; }
.input { display: block; width: 100%; height: 45px; padding: 0 11px; border: 1px solid #ebedf0; border-radius: 6px; background: #fff; }
input::placeholder { color: #a1a7b3; opacity: 1; }
.unit { display: flex; align-items: center; }
.unit input { flex: 1; min-width: 0; border: 0; padding: 0; outline: 0; background: none; }
.unit span { font-size: 10px; line-height: 14px; color: #9ca3af; }

.group-title { height: 29px; border-bottom: 2px solid #e9eaee; font-size: 13px; line-height: 17px; font-weight: 600; color: #1f2f3d; }
.tiles + .group-title { margin-top: 29px; }
.tiles { display: grid; grid-template-columns: repeat(4, 1fr); gap: 11px; margin-top: 14px; }
.tile { display: grid; grid-template-columns: 26px 1fr; grid-template-rows: 26px 1fr; height: 64px; padding-bottom: 8px; border: 2px solid #fde68a; border-radius: 8px; background: #fffbeb; }
.tile svg { width: 22px; height: 22px; margin-top: 2px; margin-left: 65px; fill: #f59e0b; }
.tile span { grid-column: 2; align-self: end; font-size: 10px; line-height: 14px; font-weight: 600; color: #92400e; }

.search { display: flex; align-items: center; gap: 10px; }
.search .input { flex: 1; }
.search-btn { width: 64px; height: 42px; border-radius: 6px; background: #3b82f6; color: #fff; font-weight: 600; }
.map { display: block; width: 100%; height: 358px; border-radius: 6px; font-family: "Noto Sans CJK KR", sans-serif; }
.map text { text-anchor: middle; }
.place { font-size: 35px; font-weight: 500; fill: #414b55; stroke: #fff; stroke-width: 6px; stroke-linejoin: round; paint-order: stroke; }
.place .sm { font-size: 31px; }
.orange { fill: #cf701c; }
.violet { fill: #8477c6; }
.brown { fill: #94693f; }
.magenta { fill: #a95fb8; }
.sky { fill: #3a9ade; }
.leaf { fill: #55823f; }
.num { font-size: 26px; font-weight: 700; fill: #333; }
.p-mark { font-size: 30px; font-weight: 700; fill: #fff; }
.hall { font-size: 41px; font-weight: 500; fill: #111; stroke: #fff; stroke-width: 6px; paint-order: stroke; }
.street { font-size: 34px; fill: #b9b49b; stroke: #fff; stroke-width: 4px; paint-order: stroke; }
.line1, .line2 { font-size: 30px; font-weight: 700; fill: #2c50b4; }
.line2 { fill: #35b34a; }
.station { font-size: 37px; font-weight: 700; fill: #fff; stroke-width: 8px; stroke-linejoin: round; paint-order: stroke; }
.blue { stroke: #2c50b4; }
.green { stroke: #35a947; }
.map .scale, .map .kakao { text-anchor: start; font-size: 28px; font-weight: 700; fill: #111; }
.map .kakao { font-size: 35px; font-weight: 500; }

.agency { margin-top: 21px; padding: 26px 26px 49px; border: 1px solid #eaeaec; border-radius: 7px; }
.agency-head { height: 46px; padding-left: 27px; border-bottom: 1px solid #dcdcdc; background: #f5f5f5; font-size: 13px; line-height: 45px; font-weight: 600; color: #222; }
.agency-head small { margin-left: 2px; font-size: 10px; color: #f00; }
.agency-row { display: flex; gap: 11px; border: 1px solid #feedae; border-radius: 11px; background: #fffbeb; }
.agency-row + .agency-row { margin-top: 21px; }

.editor { margin-top: 18px; border: 1px solid #eaeaec; border-radius: 8px; overflow: hidden; }
.toolbar { display: flex; align-items: center; gap: 18px; height: 64px; padding: 0 18px 0 21px; border-bottom: 1px solid #eaeaec; }
.toolbar button { display: flex; align-items: center; justify-content: center; width: 18px; height: 18px; }
.toolbar svg { width: 18px; height: 18px; fill: #05204a; }
.toolbar .ln { fill: none; stroke: #05204a; stroke-width: 1.5px; }
.size { position: relative; width: 75px; height: 18px; margin-left: -2px; }
.size input { appearance: none; display: block; width: 100%; height: 18px; background: none; }
.size input::-webkit-slider-runnable-track { height: 3px; border-radius: 2px; background: #e6e6e8; }
.size input::-webkit-slider-thumb { appearance: none; width: 27px; height: 17px; margin-top: -7px; border-radius: 9px; background: #05204a; }
.size span { position: absolute; top: 2px; left: 0; width: 27px; text-align: center; font-size: 8px; color: #fff; pointer-events: none; }
.tools { display: flex; gap: 14px; }
.tools.wide { gap: 20px; }
.toolbar .code { width: 27px; height: 27px; margin-left: auto; border-radius: 6px; background: #eff2fa; }
.editor-body { position: relative; height: 486px; padding: 27px 68px 27px 27px; outline: 0; color: #222; font-family: "Noto Sans CJK KR", sans-serif; font-size: 15px; line-height: 20px; }
.corner { position: absolute; width: 9px; height: 9px; border: 0 solid #bbb; }
.tl { top: 18px; left: 18px; border-width: 0 1px 1px 0; }
.tr { top: 18px; right: 18px; border-width: 0 0 1px 1px; }
.bl { bottom: 20px; left: 18px; border-width: 1px 1px 0 0; }
.br { bottom: 20px; right: 18px; border-width: 1px 0 0 1px; }
.editor-tip { height: 50px; padding-left: 18px; background: #eff2fa; line-height: 50px; color: #666; font-family: "Noto Sans CJK KR", sans-serif; }

.hint { font-size: 10px; line-height: 14px; color: #999; }
.links { display: flex; flex-direction: column; gap: 10px; margin-top: 29px; }
.link-box { display: flex; align-items: center; gap: 8px; height: 44px; padding: 0 12px; border: 1px solid #e5e5e8; border-radius: 8px; }
.link-box svg { flex: none; width: 15px; height: 15px; color: #999; }
.link-box input { flex: 1; border: 0; outline: 0; background: none; }
.files { margin-top: 26px; }
.drop { display: flex; align-items: center; justify-content: center; height: 89px; margin-top: 8px; padding-bottom: 7px; border: 1px dashed #eeeef0; border-radius: 6px; color: #a1a1aa; }
.actions { display: flex; justify-content: center; gap: 3px; margin-top: 50px; }
.actions button { height: 42px; border-radius: 8px; font-weight: 700; }
.actions .cancel { width: 78px; border: 1px solid #e5e5e8; color: #111; }
.actions .submit { width: 98px; background: #ff7f60; color: #fff; }
```
